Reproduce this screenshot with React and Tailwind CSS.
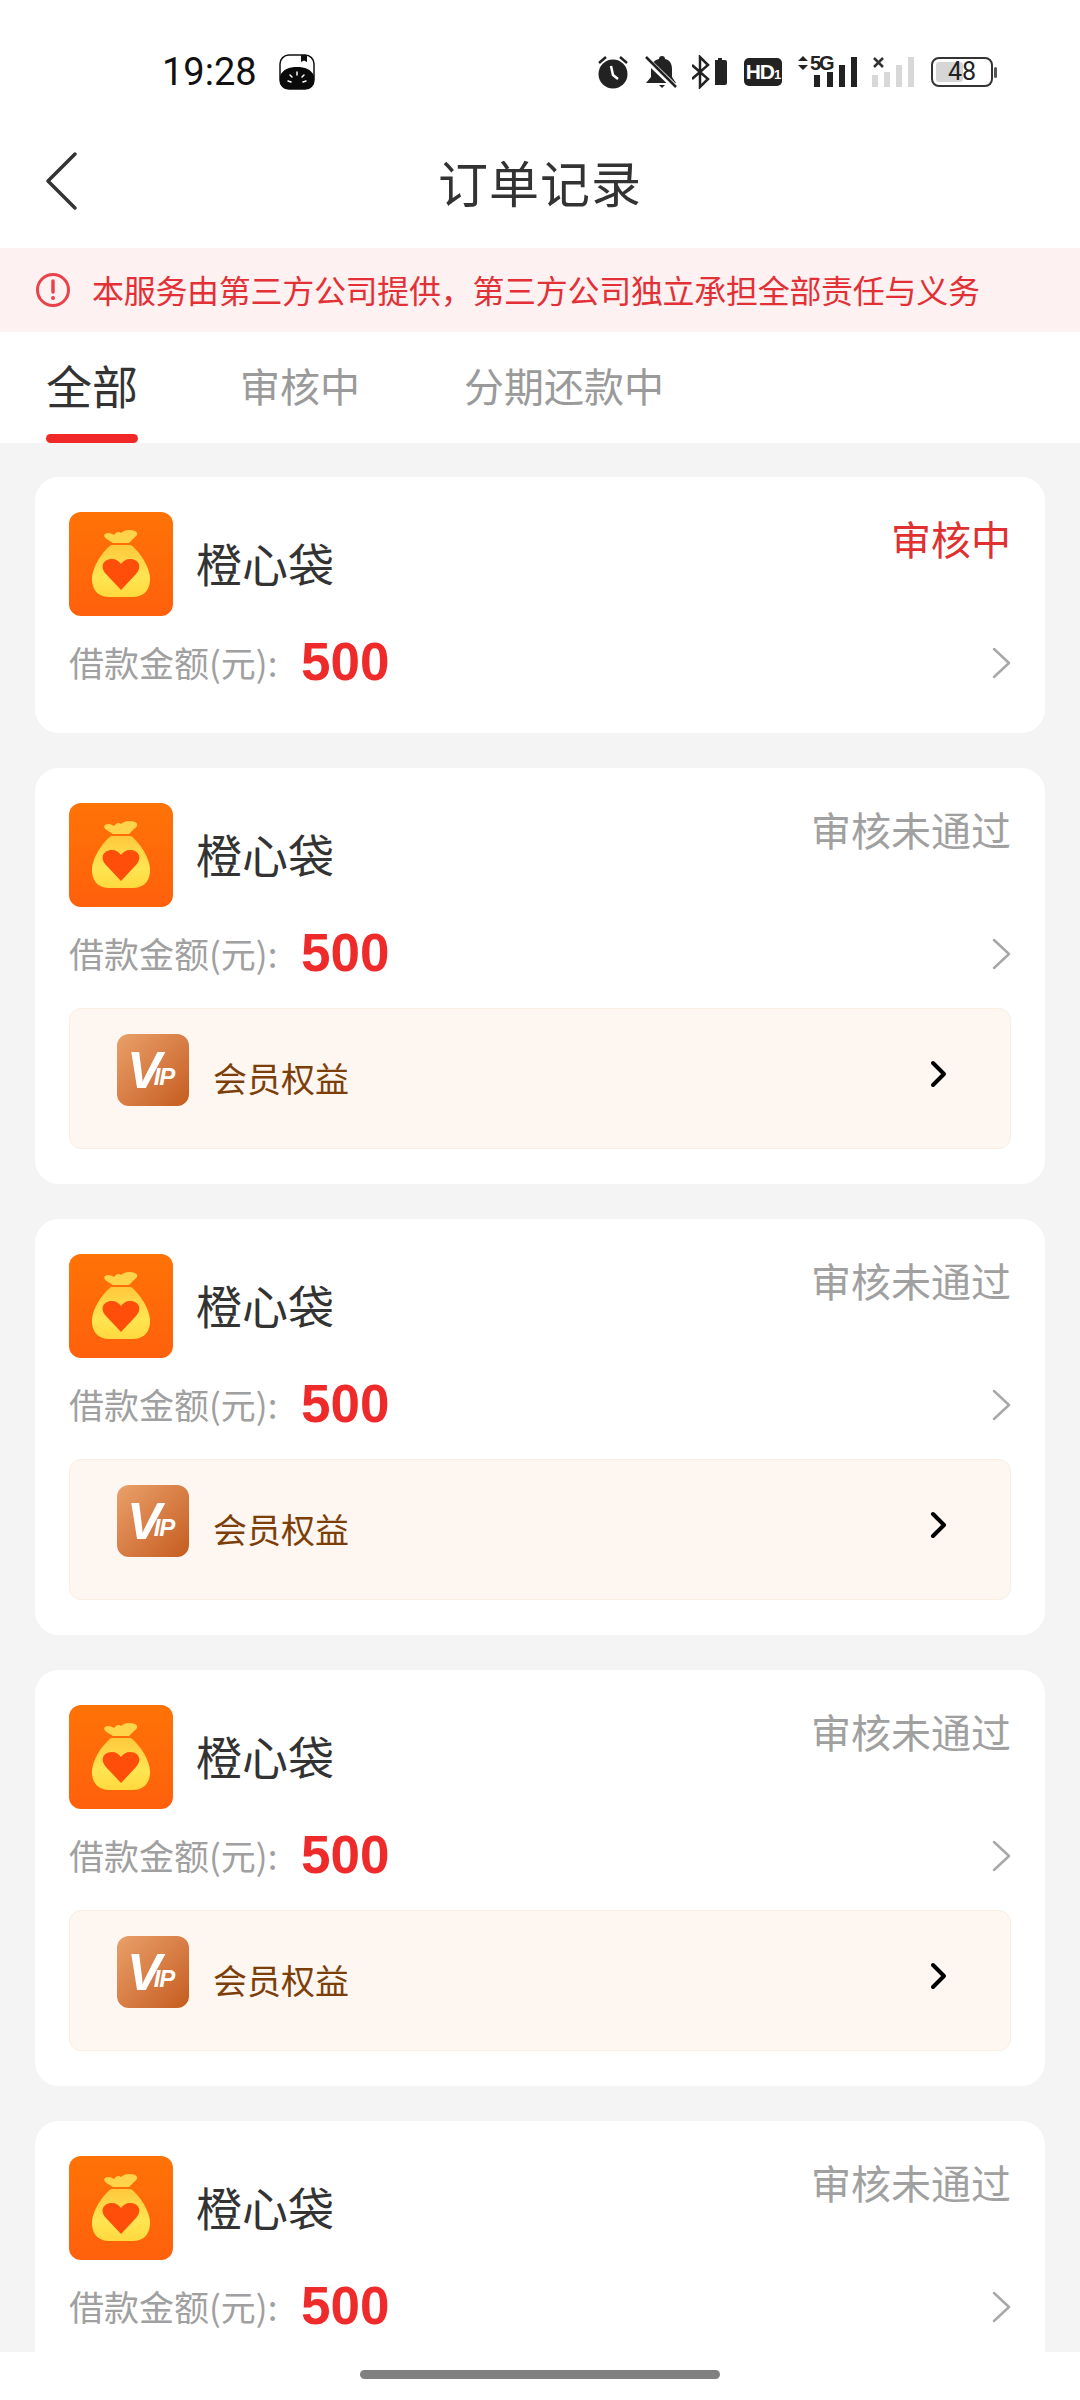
const orders = [
  { status: '审核中', active: true },
  { status: '审核未通过', vip: true },
  { status: '审核未通过', vip: true },
  { status: '审核未通过', vip: true },
  { status: '审核未通过' },
]

function WatchFace() {
  return (
    <svg width="36" height="36" viewBox="0 0 36 36">
      <rect x="1" y="1" width="34" height="34" rx="9" fill="#fff" stroke="#111" strokeWidth="1.500" />
      <path d="M1 22C4 15 10 13 18 13s14 2 17 9v5a8 8 0 0 1-8 8H9a8 8 0 0 1-8-8z" fill="#0a0a0a" />
      <path d="M22 1h6v7l-3-1.500L22 8z" fill="#111" />
      <path d="M18 18v3M11 21l2 2M25 21l-2 2M9 27l3 1M27 27l-3 1" stroke="#fff" strokeWidth="1.500" strokeLinecap="round" />
    </svg>
  )
}

function StatusIcons() {
  return (
    <div className="flex items-center text-[#222]">
      <svg width="32" height="34" viewBox="0 0 32 34" className="mr-[16px]">
        <circle cx="16" cy="19" r="14.500" fill="#222" />
        <path d="M2 8l7-6M30 8l-7-6" stroke="#222" strokeWidth="2.500" />
        <path d="M14 11l2 9 5 4" stroke="#fff" strokeWidth="2.500" fill="none" />
      </svg>
      <svg width="32" height="34" viewBox="0 0 32 34" className="mr-[15px]">
        <path d="M17 1c2 0 3 1 3 3 5 1 7 5 7 10v8l4 6H1l5-6v-8c0-5 3-9 8-10 0-2 1-3 3-3z" fill="#222" />
        <path d="M14 30h6l-3 3z" fill="#222" />
        <path d="M0 3l30 29" stroke="#fff" strokeWidth="6" />
        <path d="M1 2l30 30" stroke="#222" strokeWidth="2.500" />
      </svg>
      <svg width="35" height="34" viewBox="0 0 35 34" className="mr-[17px]">
        <path d="M0 10l16 14-8 8V2l8 8L0 24" stroke="#222" strokeWidth="2.500" fill="none" />
        <path d="M23 5h3V3h4v2h3a2 2 0 0 1 2 2v21a2 2 0 0 1-2 2H23z" fill="#222" />
      </svg>
      <div className="w-[38px] h-[28px] mr-[15px] bg-[#222] rounded-[5px] text-white text-[21px] leading-[28px] font-bold text-center font-['Liberation_Sans',sans-serif] tracking-[-1px]">
        HD<span className="text-[13px]">1</span>
      </div>
      <div className="relative w-[60px] h-[34px] mr-[15px]">
        <svg width="60" height="34" viewBox="0 0 60 34" className="absolute left-0 top-0">
          <path d="M1 6l5-5 5 5zM1 10l5 5 5-5z" fill="#222" />
          <rect x="17" y="20" width="6" height="12" fill="#222" />
          <rect x="30" y="17" width="6" height="15" fill="#222" />
          <rect x="42" y="10" width="6" height="22" fill="#222" />
          <rect x="54" y="2" width="6" height="30" fill="#222" />
        </svg>
        <span className="absolute left-[13px] top-[-3px] text-[20px] leading-[22px] font-bold font-['Liberation_Sans',sans-serif] tracking-[-2px] text-[#222]">5G</span>
      </div>
      <svg width="44" height="34" viewBox="0 0 44 34" className="mr-[15px]">
        <path d="M2 3l9 9M11 3l-9 9" stroke="#333" strokeWidth="2.500" />
        <rect x="0" y="20" width="6" height="12" fill="#d8d8d8" />
        <rect x="12" y="17" width="6" height="15" fill="#d8d8d8" />
        <rect x="24" y="10" width="6" height="22" fill="#d8d8d8" />
        <rect x="36" y="2" width="6" height="30" fill="#d8d8d8" />
      </svg>
      <div className="flex items-center">
        <div className="relative w-[62px] h-[30px] border-[2px] border-[#333] rounded-[8px] overflow-hidden">
          <div className="absolute left-[3px] top-[3px] bottom-[3px] w-[27px] bg-[#d6d6d6] rounded-[3px]" />
          <span className="absolute inset-0 text-center text-[25px] leading-[26px] text-[#222] font-['Roboto',sans-serif]">48</span>
        </div>
        <div className="w-[3px] h-[11px] ml-[1px] bg-[#555] rounded-full" />
      </div>
    </div>
  )
}

function BagLogo() {
  return (
    <svg width="104" height="104" viewBox="0 0 104 104" className="shrink-0">
      <defs>
        <linearGradient id="bagBg" x1="0" y1="0" x2="0" y2="1">
          <stop offset="0" stopColor="#ff7306" />
          <stop offset="1" stopColor="#ff600c" />
        </linearGradient>
        <linearGradient id="bagFill" x1="0" y1="0" x2="0" y2="1">
          <stop offset="0" stopColor="#ffc83c" />
          <stop offset="0.6" stopColor="#ffe552" />
          <stop offset="1" stopColor="#ffd93e" />
        </linearGradient>
      </defs>
      <rect width="104" height="104" rx="12" fill="url(#bagBg)" />
      <path d="M36 22c3-2 6-1 9 1 2-3 5-4 7-2 3-3 9-4 14-2 4 2 2 5-1 7l-5 5H44l-5-3c-3-2-5-4-3-6z" fill="#ffd34a" />
      <path d="M42 33h20c10 8 20 24 19 36-1 11-8 16-17 16H40c-9 0-16-5-17-16-1-12 9-28 19-36z" fill="url(#bagFill)" />
      <path d="M52 78L37 62c-7-8-2-15 6-15 4 0 7 2 9 5 2-3 5-5 9-5 8 0 13 7 6 15z" fill="#ff4d0a" />
    </svg>
  )
}

function VipBox() {
  return (
    <div className="mt-[23px] h-[141px] rounded-[12px] border border-[#fbeee3] bg-[#fef6f0] flex items-center pl-[47px] pr-[62px]">
      <div className="w-[72px] h-[72px] -mt-[18px] rounded-[12px] bg-gradient-to-br from-[#e9a069] to-[#c55c1c] flex items-center pl-[10px] text-white italic font-bold font-['Liberation_Sans',sans-serif] shrink-0 overflow-hidden">
        <span className="text-[52px] leading-none tracking-[-8px]">V</span>
        <span className="text-[24px] leading-none mt-[14px] tracking-[-1px]">IP</span>
      </div>
      <span className="ml-[24px] -mt-[3px] text-[34px] text-[#7c3f0a] flex-1">会员权益</span>
      <svg width="18" height="28" viewBox="0 0 18 28" className="-mt-[9px]">
        <path d="M3 3l11 11L3 25" fill="none" stroke="#000" strokeWidth="4" strokeLinecap="round" strokeLinejoin="round" />
      </svg>
    </div>
  )
}

function OrderCard({ order }) {
  return (
    <div className={`bg-white rounded-[24px] pt-[35px] pl-[34px] pr-[34px] ${order.active ? 'pb-[39px]' : 'pb-[35px]'}`}>
      <div className="flex items-start">
        <BagLogo />
        <div className="ml-[23px] h-[104px] flex items-center text-[46px] text-[#333] pb-[3px]">橙心袋</div>
        <div className={`ml-auto text-[40px] leading-[52px] ${order.active ? 'text-[#e0302f]' : 'text-[#a0a0a0]'}`}>
          {order.status}
        </div>
      </div>
      <div className="mt-[14px] h-[64px] flex items-center">
        <span className="text-[35px] text-[#a0a0a0] w-[232px]">借款金额(元):</span>
        <span className="text-[53px] font-bold text-[#ee2a2a] font-['Liberation_Sans',sans-serif]">500</span>
        <svg width="20" height="32" viewBox="0 0 20 32" className="ml-auto mt-[2px]">
          <path d="M3 2l15 14L3 30" fill="none" stroke="#a8a8a8" strokeWidth="2.500" strokeLinecap="round" strokeLinejoin="round" />
        </svg>
      </div>
      {order.vip && <VipBox />}
    </div>
  )
}

export default function App() {
  return (
    <div className="w-[1080px] h-[2400px] flex flex-col overflow-hidden bg-white font-['Noto_Sans_CJK_SC','Noto_Sans',sans-serif]">
      {/* Status bar */}
      <div className="h-[144px] shrink-0 flex items-center pl-[162px] pr-[83px]">
        <span className="text-[38px] text-[#111] font-['Roboto',sans-serif]">19:28</span>
        <div className="ml-[22px]"><WatchFace /></div>
        <div className="ml-auto"><StatusIcons /></div>
      </div>

      {/* Header */}
      <div className="relative h-[104px] shrink-0 flex items-center justify-center">
        <svg width="34" height="60" viewBox="0 0 34 60" className="absolute left-[44px] top-[7px]">
          <path d="M31 3L4 30l27 27" fill="none" stroke="#333" strokeWidth="3.500" strokeLinecap="round" strokeLinejoin="round" />
        </svg>
        <h1 className="text-[50px] font-normal text-[#333] -mt-[30px] tracking-[1px]">订单记录</h1>
      </div>

      {/* Notice */}
      <div className="h-[84px] shrink-0 bg-[#fef1f1] flex items-center pl-[35px]">
        <svg width="36" height="36" viewBox="0 0 36 36" className="shrink-0">
          <circle cx="18" cy="18" r="15.500" fill="none" stroke="#e8434a" strokeWidth="3" />
          <path d="M18 9v11" stroke="#e8434a" strokeWidth="3.500" strokeLinecap="round" />
          <circle cx="18" cy="26" r="2" fill="#e8434a" />
        </svg>
        <span className="ml-[21px] -mt-[2px] text-[32px] text-[#e23036] whitespace-nowrap tracking-[-0.3px]">本服务由第三方公司提供，第三方公司独立承担全部责任与义务</span>
      </div>

      {/* Tabs */}
      <div className="h-[111px] shrink-0 flex pl-[46px]">
        <div className="w-[92px] flex flex-col items-center justify-between">
          <span className="mt-[21px] text-[46px] leading-[62px] text-[#333]">全部</span>
          <div className="w-[92px] h-[9px] rounded-full bg-[#f02828]" />
        </div>
        <span className="ml-[102px] mt-[22px] text-[40px] leading-[62px] text-[#9a9a9a]">审核中</span>
        <span className="ml-[104px] mt-[22px] text-[40px] leading-[62px] text-[#9a9a9a]">分期还款中</span>
      </div>

      {/* Orders */}
      <div className="flex-1 min-h-0 overflow-hidden bg-[#f4f4f4] px-[35px] pt-[34px] flex flex-col gap-[35px]">
        {orders.map((order, i) => (
          <div key={i} className="shrink-0">
            <OrderCard order={order} />
          </div>
        ))}
      </div>

      {/* Gesture bar */}
      <div className="h-[48px] shrink-0 bg-white pt-[18px]">
        <div className="mx-auto w-[360px] h-[9px] rounded-full bg-[#808080]" />
      </div>
    </div>
  )
}
